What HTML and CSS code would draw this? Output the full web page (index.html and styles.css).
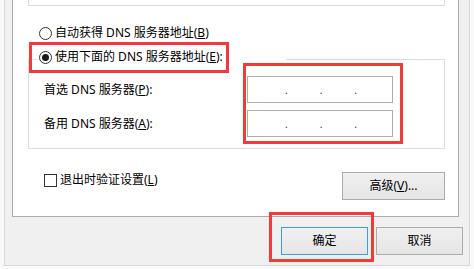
FILE: index.html
```html
<!DOCTYPE html>
<html lang="zh-CN">
<head>
<meta charset="utf-8">
<title>DNS 设置</title>
<link rel="stylesheet" href="styles.css">
</head>
<body>
<div class="frame">
  <div class="panel">
    <div class="topgroup"></div>
    <div class="radio-row r1"><span class="radio"></span><span class="txt">自动获得 DNS 服务器地址(<u>B</u>)</span></div>
    <fieldset class="dns">
      <legend class="legend"><span class="radio-row"><span class="radio checked"></span><span class="txt">使用下面的 DNS 服务器地址(<u>E</u>):</span></span></legend>
      <div class="grid">
        <span class="lbl">首选 DNS 服务器(<u>P</u>):</span>
        <div class="ip"><span>.</span><span>.</span><span>.</span></div>
        <span class="lbl">备用 DNS 服务器(<u>A</u>):</span>
        <div class="ip"><span>.</span><span>.</span><span>.</span></div>
      </div>
    </fieldset>
    <div class="opts">
      <div class="check-row"><span class="checkbox"></span><span class="txt">退出时验证设置(<u>L</u>)</span></div>
      <button class="btn adv">高级(<u>V</u>)...</button>
    </div>
  </div>
  <div class="actions">
    <button class="btn ok">确定</button>
    <button class="btn">取消</button>
  </div>
</div>
<div class="mark m1"></div>
<div class="mark m2"></div>
<div class="mark m3"></div>
</body>
</html>
```
FILE: styles.css
```css
* { box-sizing: border-box; }
html, body { margin: 0; padding: 0; }
body {
  width: 474px;
  height: 269px;
  overflow: hidden;
  background: #f9f9f9;
  font-family: "Noto Sans", "Noto Sans CJK SC", sans-serif;
  font-size: 12px;
  color: #000;
  position: relative;
}
u { text-decoration: underline; text-underline-offset: 1px; }

.frame {
  margin-left: 4px;
  width: 466px;
  height: 266px;
  background: #f0f0f0;
  border: 1px solid #d9d9d9;
  border-top: none;
  padding-bottom: 10px;
}

.panel {
  margin-left: 7px;
  width: 447px;
  height: 217px;
  background: #fff;
  border: 1px solid #acacac;
  border-top: none;
}

.topgroup {
  margin: 0 13px 0 15px;
  height: 6px;
  border: 1px solid #dcdcdc;
  border-top: none;
}

.radio-row {
  display: flex;
  align-items: center;
  height: 16px;
  line-height: 16px;
  white-space: nowrap;
}
.r1 { margin-top: 19px; padding-left: 26px; }
.radio {
  width: 13px;
  height: 13px;
  border: 1px solid #333;
  border-radius: 50%;
  background: #fff;
  margin-right: 3px;
  flex: none;
  display: flex;
  align-items: center;
  justify-content: center;
}
.radio.checked::after {
  content: "";
  width: 7px;
  height: 7px;
  border-radius: 50%;
  background: #1a1a1a;
}

.dns {
  margin: 8px 13px 0 15px;
  padding: 0;
  border: 1px solid #dcdcdc;
  min-width: 0;
}
.legend {
  margin-left: 8px;
  width: 249px;
  padding: 0 0 4px 2px;
  background: #fff;
}

.grid {
  display: grid;
  grid-template-columns: 203px 146px;
  row-gap: 7px;
  align-items: center;
  padding: 7px 0 11px 15px;
}
.lbl { line-height: 16px; white-space: nowrap; padding-top: 1px; }
.ip {
  height: 27px;
  border: 1px solid #abadb3;
  background: #fff;
  display: flex;
  justify-content: space-between;
  align-items: center;
  padding: 0 35px 0 37px;
  line-height: 12px;
  font-size: 10px;
  color: #333;
}

.opts {
  margin: 23px 13px 0 15px;
  padding-left: 16px;
  display: flex;
  justify-content: space-between;
  align-items: flex-start;
}
.check-row {
  display: flex;
  align-items: center;
  height: 16px;
  line-height: 16px;
}
.checkbox {
  width: 13px;
  height: 13px;
  border: 1px solid #333;
  background: #fff;
  margin-right: 3px;
}

.btn {
  font: inherit;
  color: #000;
  height: 28px;
  border: 1px solid #acacac;
  background: linear-gradient(#f0f0f0, #e5e5e5);
  padding: 0;
  line-height: 16px;
  margin: 0;
}
.adv { width: 103px; }

.actions {
  display: flex;
  justify-content: flex-end;
  gap: 8px;
  margin-top: 10px;
  padding-right: 6px;
}
.actions .btn { width: 87px; }
.ok { border-color: #3c9bf5; }

.mark {
  position: absolute;
  border: 3px solid #f23a3a;
}
.m1 { left: 29px; top: 42px; width: 200px; height: 31px; }
.m2 { left: 243px; top: 63px; width: 160px; height: 81px; }
.m3 { left: 269px; top: 212px; width: 105px; height: 50px; }
```
